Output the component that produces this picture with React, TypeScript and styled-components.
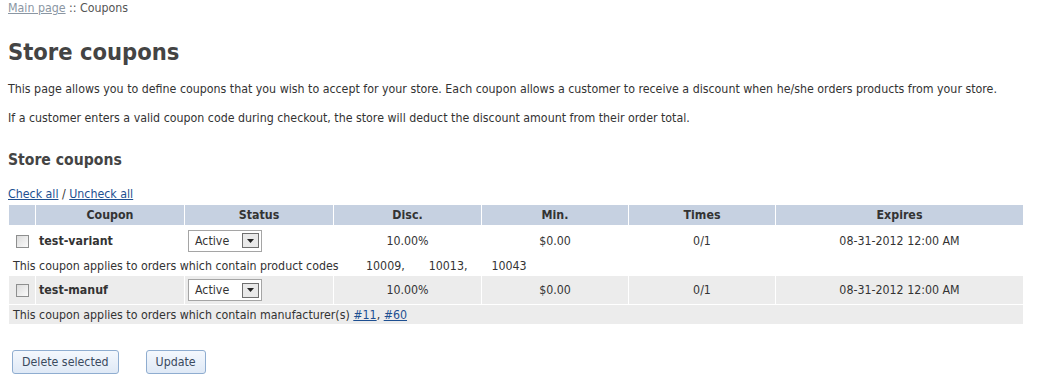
import React from 'react';
import styled, { createGlobalStyle } from 'styled-components';

const GlobalStyle = createGlobalStyle`
  body {
    margin: 0;
    background: #fff;
    color: #333;
    font-family: "DejaVu Sans Condensed", "DejaVu Sans", sans-serif;
    font-size: 12.3px;
  }
`;

const Page = styled.div`
  padding: 0 8px;
`;

const Breadcrumbs = styled.div`
  padding-top: 1px;
  line-height: 14px;
  color: #555;
`;

const CrumbLink = styled.a`
  color: #8a96a3;
  text-decoration: underline;
`;

const Title = styled.h1`
  margin: 22px 0 0;
  font-size: 23.5px;
  line-height: 30px;
  font-weight: bold;
  color: #444;
`;

const Text = styled.p`
  margin: 15px 0 0;
  line-height: 14px;
  & + & {
    margin-top: 15px;
  }
`;

const Subtitle = styled.h2`
  margin: 25px 0 0;
  font-size: 15.6px;
  line-height: 20px;
  font-weight: bold;
  color: #444;
`;

const CheckLinks = styled.div`
  margin-top: 17px;
  line-height: 14px;
`;

const BlueLink = styled.a`
  color: #1d4f91;
  text-decoration: underline;
`;

const Table = styled.table`
  border-collapse: separate;
  border-spacing: 1px;
  width: 1016px;
  margin-top: 3px;
  font-size: 12.3px;
  color: #333;
`;

const Th = styled.th<{ w?: number }>`
  background: #c6d1e1;
  color: #333;
  font-weight: bold;
  height: 20px;
  padding: 0;
  text-align: center;
  width: ${(p) => (p.w ? `${p.w}px` : 'auto')};
`;

const Tr = styled.tr<{ shade?: boolean }>`
  background: ${(p) => (p.shade ? '#ececec' : '#fff')};
`;

const Td = styled.td<{ align?: string; h?: number }>`
  padding: 0 3px;
  height: ${(p) => p.h || 28}px;
  text-align: ${(p) => p.align || 'center'};
`;

const NoteTd = styled.td`
  padding: 0 4px;
  height: 19px;
  white-space: nowrap;
`;

const ProductCode = styled.span`
  margin-left: 24px;
`;

const Box = styled.span`
  display: inline-block;
  width: 11px;
  height: 11px;
  border: 1px solid #8e8f8f;
  background: linear-gradient(135deg, #dcdcdc, #fbfbfb);
  vertical-align: middle;
  margin-left: 4px;
`;

const Code = styled.span`
  font-weight: bold;
`;

const Select = styled.div`
  display: flex;
  align-items: center;
  justify-content: space-between;
  width: 74px;
  height: 22px;
  box-sizing: border-box;
  border: 1px solid #a5a5a5;
  background: #fff;
  padding: 0 2px 0 6px;
`;

const Arrow = styled.span`
  display: flex;
  align-items: center;
  justify-content: center;
  width: 17px;
  height: 15px;
  box-sizing: border-box;
  border: 1px solid #6f6f6f;
  background: #e9e9e9;
`;

const Buttons = styled.div`
  display: flex;
  gap: 27px;
  margin: 25px 0 0 4px;
`;

const Button = styled.button`
  height: 24px;
  padding: 0 9px;
  border: 1px solid #8fadd0;
  border-radius: 3px;
  background: linear-gradient(#f4f8fd, #dfe9f6);
  color: #3a4a5e;
  font-family: inherit;
  font-size: 12.3px;
`;

const Status = () => (
  <Select>
    <span>Active</span>
    <Arrow>
      <svg width="7" height="4" viewBox="0 0 7 4">
        <path d="M0 0h7L3.5 4z" fill="#222" />
      </svg>
    </Arrow>
  </Select>
);

export default function App() {
  return (
    <Page>
      <GlobalStyle />
      <Breadcrumbs>
        <CrumbLink href="#">Main page</CrumbLink> :: Coupons
      </Breadcrumbs>
      <Title>Store coupons</Title>
      <Text>
        This page allows you to define coupons that you wish to accept for your store. Each coupon
        allows a customer to receive a discount when he/she orders products from your store.
      </Text>
      <Text>
        If a customer enters a valid coupon code during checkout, the store will deduct the discount
        amount from their order total.
      </Text>
      <Subtitle>Store coupons</Subtitle>
      <CheckLinks>
        <BlueLink href="#">Check all</BlueLink> / <BlueLink href="#">Uncheck all</BlueLink>
      </CheckLinks>
      <Table>
        <thead>
          <tr>
            <Th w={26} />
            <Th w={148}>Coupon</Th>
            <Th w={148}>Status</Th>
            <Th w={147}>Disc.</Th>
            <Th w={146}>Min.</Th>
            <Th w={146}>Times</Th>
            <Th>Expires</Th>
          </tr>
        </thead>
        <tbody>
          <Tr>
            <Td align="left" h={29}><Box /></Td>
            <Td align="left"><Code>test-variant</Code></Td>
            <Td align="left"><Status /></Td>
            <Td>10.00%</Td>
            <Td>$0.00</Td>
            <Td>0/1</Td>
            <Td>08-31-2012 12:00 AM</Td>
          </Tr>
          <Tr>
            <NoteTd colSpan={7}>
              This coupon applies to orders which contain product codes{' '}
              <ProductCode>10009,</ProductCode>
              <ProductCode>10013,</ProductCode>
              <ProductCode>10043</ProductCode>
            </NoteTd>
          </Tr>
          <Tr shade>
            <Td align="left"><Box /></Td>
            <Td align="left"><Code>test-manuf</Code></Td>
            <Td align="left"><Status /></Td>
            <Td>10.00%</Td>
            <Td>$0.00</Td>
            <Td>0/1</Td>
            <Td>08-31-2012 12:00 AM</Td>
          </Tr>
          <Tr shade>
            <NoteTd colSpan={7}>
              This coupon applies to orders which contain manufacturer(s){' '}
              <BlueLink href="#">#11</BlueLink>, <BlueLink href="#">#60</BlueLink>
            </NoteTd>
          </Tr>
        </tbody>
      </Table>
      <Buttons>
        <Button>Delete selected</Button>
        <Button>Update</Button>
      </Buttons>
    </Page>
  );
}
